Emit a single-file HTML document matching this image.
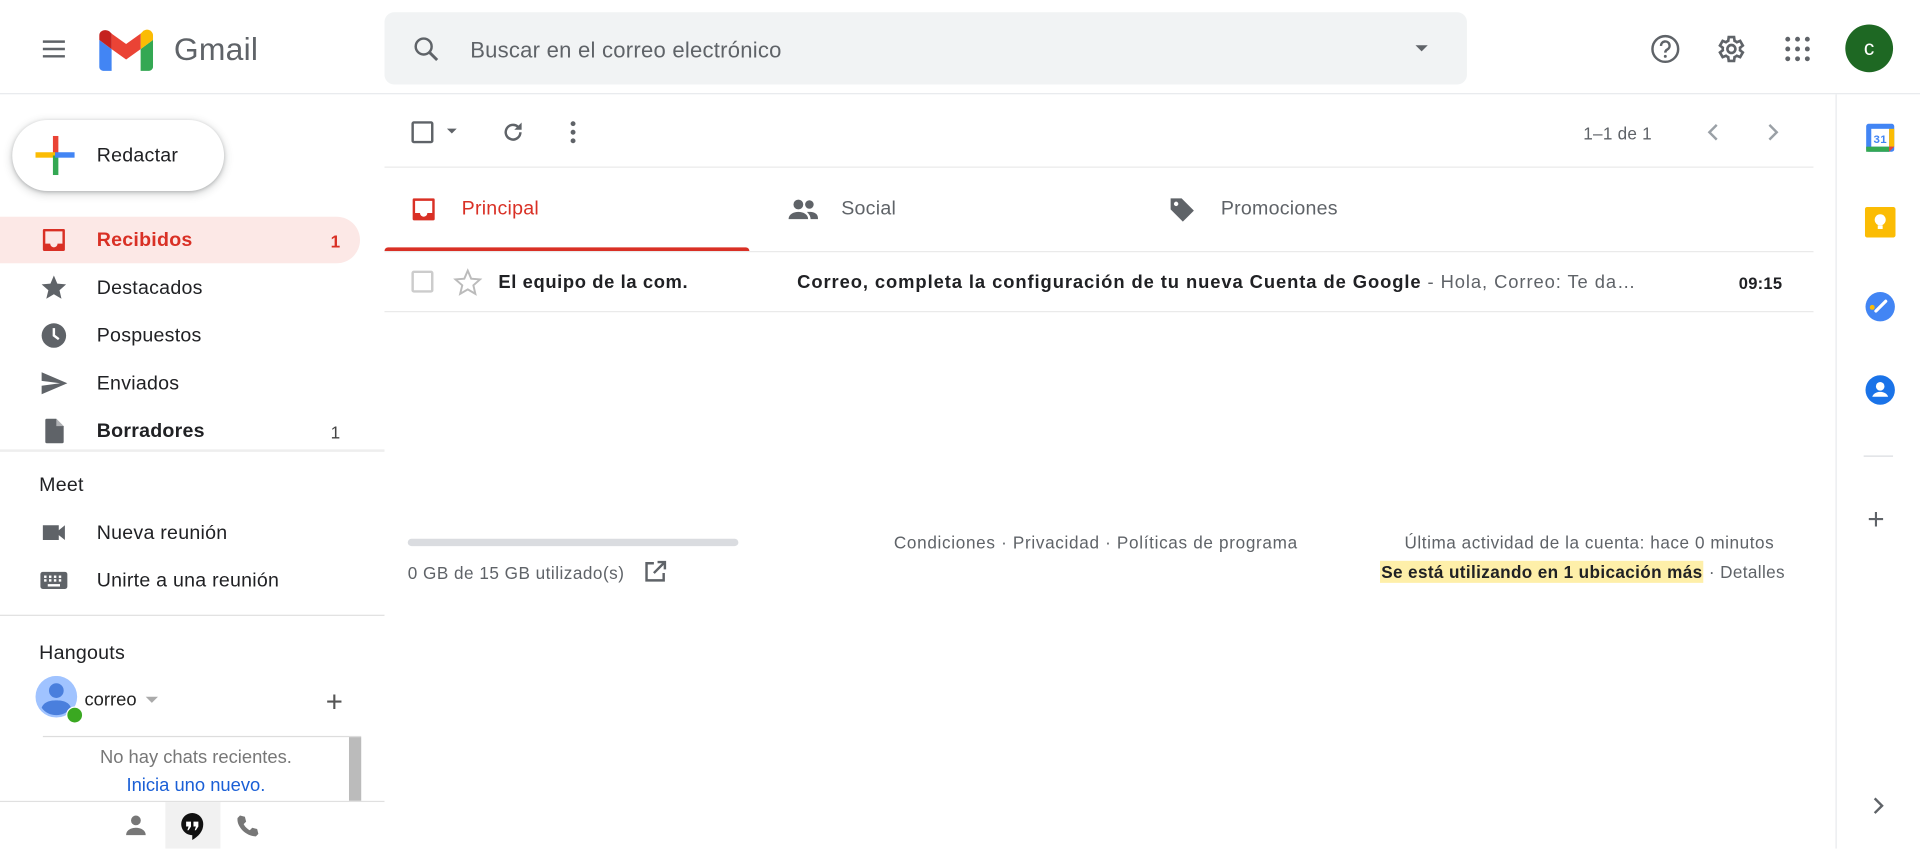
<!DOCTYPE html>
<html><head><meta charset="utf-8"><style>
*{box-sizing:border-box;margin:0;padding:0}
html,body{width:1920px;height:849px;overflow:hidden;background:#fff}
#w{position:absolute;left:0;top:0;width:1568px;height:693px;transform:scale(1.22449);transform-origin:0 0;font-family:"Liberation Sans",Arial,sans-serif;color:#202124;letter-spacing:.2px}
.a{position:absolute}
.t{font-size:16px;color:#202124}
svg{display:block}
</style></head><body><div id="w">
<div class="a" style="left:0;top:76px;width:1568px;height:1px;background:#e8eaed"></div>
<svg class="a" style="left:32px;top:28px" width="24" height="24"><path d="M3 6h18M3 12h18M3 18h18" stroke="#5f6368" stroke-width="2"/></svg>
<svg class="a" style="left:81px;top:24px" width="44" height="34" viewBox="0 0 52 40">
<path d="M4 40h8V19L0 10v26c0 2 2 4 4 4z" fill="#4285f4"/><path d="M40 40h8c2 0 4-2 4-4V10l-12 9z" fill="#34a853"/>
<path d="M40 4v15l12-9V6c0-5-6-8-10-4z" fill="#fbbc04"/><path d="M12 19V4l14 10 14-10v15L26 29z" fill="#ea4335"/>
<path d="M0 6v4l12 9V4L10 2C6-1 0 1 0 6z" fill="#c5221f"/></svg>
<div class="a" style="left:142px;top:25px;font-size:26px;color:#5f6368">Gmail</div>
<div class="a" style="left:314px;top:10px;width:884px;height:59px;background:#f1f3f4;border-radius:8px"></div>
<svg class="a" style="left:336px;top:28px" width="24" height="24"><circle cx="10" cy="10" r="6.5" fill="none" stroke="#5f6368" stroke-width="2"/><path d="M15 15l6 6" stroke="#5f6368" stroke-width="2.4"/></svg>
<div class="a" style="left:384px;top:31px;font-size:18px;color:#5f6368">Buscar en el correo electrónico</div>
<div class="a" style="left:1156px;top:37px;border:5px solid transparent;border-top-color:#5f6368"></div>
<svg class="a" style="left:1347px;top:27px" width="26" height="26"><circle cx="13" cy="13" r="10.5" fill="none" stroke="#5f6368" stroke-width="2"/><path d="M9.5 10.5a3.5 3.5 0 1 1 5 3c-1.2.7-1.5 1.3-1.5 2.5" fill="none" stroke="#5f6368" stroke-width="2"/><circle cx="13" cy="19" r="1.2" fill="#5f6368"/></svg>
<svg class="a" style="left:1400px;top:27px" width="26" height="26" viewBox="0 0 24 24"><path d="M19.4 13a7.5 7.5 0 0 0 0-2l2.1-1.6-2-3.5-2.5 1a7 7 0 0 0-1.7-1L14.9 3h-4l-.4 2.9a7 7 0 0 0-1.7 1l-2.5-1-2 3.5L6.4 11a7.5 7.5 0 0 0 0 2l-2.1 1.6 2 3.5 2.5-1a7 7 0 0 0 1.7 1l.4 2.9h4l.4-2.9a7 7 0 0 0 1.7-1l2.5 1 2-3.5z" fill="none" stroke="#5f6368" stroke-width="2"/><circle cx="12.9" cy="12" r="3" fill="none" stroke="#5f6368" stroke-width="2"/></svg>
<svg class="a" style="left:1456px;top:28px" width="24" height="24"><g fill="#5f6368"><circle cx="4" cy="4" r="2"/><circle cx="12" cy="4" r="2"/><circle cx="20" cy="4" r="2"/><circle cx="4" cy="12" r="2"/><circle cx="12" cy="12" r="2"/><circle cx="20" cy="12" r="2"/><circle cx="4" cy="20" r="2"/><circle cx="12" cy="20" r="2"/><circle cx="20" cy="20" r="2"/></g></svg>
<div class="a" style="left:1507px;top:20px;width:39px;height:39px;border-radius:50%;background:#1e6823;color:#fff;font-size:17px;text-align:center;line-height:39px">c</div>
<div class="a" style="left:10px;top:98px;width:173px;height:58px;border-radius:29px;background:#fff;box-shadow:0 1px 3px rgba(60,64,67,.3),0 2px 6px 2px rgba(60,64,67,.15)"></div>
<svg class="a" style="left:29px;top:111px" width="32" height="32" viewBox="0 0 36 36"><rect x="16" y="0" width="5" height="18" fill="#ea4335"/><rect x="0" y="15" width="18" height="5" fill="#fbbc04"/><rect x="16" y="18" width="5" height="18" fill="#34a853"/><rect x="18" y="15" width="18" height="5" fill="#4285f4"/></svg>
<div class="a t" style="left:79px;top:119px">Redactar</div>
<div class="a" style="left:0;top:177px;width:294px;height:38px;background:#fce8e6;border-radius:0 19px 19px 0"></div>
<svg class="a" style="left:32px;top:184px" width="24" height="24"><path d="M4 3h16a1 1 0 0 1 1 1v16a1 1 0 0 1-1 1H4a1 1 0 0 1-1-1V4a1 1 0 0 1 1-1zm1 2v10h4a3 3 0 0 0 6 0h4V5z" fill="#d93025"/></svg>
<div class="a" style="left:79px;top:188px;font-size:16px;font-weight:bold;color:#d93025">Recibidos</div>
<div class="a" style="left:270px;top:189px;font-size:14px;font-weight:bold;color:#d93025">1</div>
<svg class="a" style="left:32px;top:223px" width="24" height="24"><path d="M12 17.3l6.2 3.7-1.6-7L22 9.2l-7.2-.6L12 2 9.2 8.6 2 9.2 7.5 14l-1.7 7z" fill="#5f6368"/></svg>
<div class="a t" style="left:79px;top:227px">Destacados</div>
<svg class="a" style="left:32px;top:262px" width="24" height="24"><circle cx="12" cy="12" r="10" fill="#5f6368"/><path d="M12 6v6l4 3" stroke="#fff" stroke-width="2" fill="none"/></svg>
<div class="a t" style="left:79px;top:266px">Pospuestos</div>
<svg class="a" style="left:32px;top:301px" width="24" height="24"><path d="M2 21l21-9L2 3v7l15 2-15 2z" fill="#5f6368"/></svg>
<div class="a t" style="left:79px;top:305px">Enviados</div>
<svg class="a" style="left:32px;top:340px" width="24" height="24"><path d="M6 2h8l6 6v13a1 1 0 0 1-1 1H6a1 1 0 0 1-1-1V3a1 1 0 0 1 1-1z" fill="#5f6368"/><path d="M14 2v6h6" fill="#fff" opacity=".5"/></svg>
<div class="a" style="left:79px;top:344px;font-size:16px;font-weight:bold">Borradores</div>
<div class="a" style="left:270px;top:345px;font-size:14px;color:#444">1</div>
<div class="a" style="left:0;top:367px;width:314px;height:2px;background:#eee"></div>
<div class="a t" style="left:32px;top:388px">Meet</div>
<svg class="a" style="left:32px;top:423px" width="24" height="24"><path d="M3 6h13v12H3zM16 10l5-4v12l-5-4z" fill="#5f6368"/></svg>
<div class="a t" style="left:79px;top:427px">Nueva reunión</div>
<svg class="a" style="left:32px;top:462px" width="24" height="24"><rect x="1" y="5" width="22" height="14" rx="2" fill="#5f6368"/><g fill="#fff"><rect x="4" y="8" width="2" height="2"/><rect x="8" y="8" width="2" height="2"/><rect x="12" y="8" width="2" height="2"/><rect x="16" y="8" width="2" height="2"/><rect x="4" y="11" width="2" height="2"/><rect x="8" y="11" width="2" height="2"/><rect x="12" y="11" width="2" height="2"/><rect x="16" y="11" width="2" height="2"/><rect x="7" y="15" width="10" height="2"/></g></svg>
<div class="a t" style="left:79px;top:466px">Unirte a una reunión</div>
<div class="a" style="left:0;top:502px;width:314px;height:1px;background:#e0e0e0"></div>
<div class="a t" style="left:32px;top:525px">Hangouts</div>
<svg class="a" style="left:29px;top:552px" width="40" height="40"><circle cx="17" cy="17" r="17" fill="#a0c3ff"/><circle cx="17" cy="12" r="6" fill="#4a7fdd"/><path d="M5 26c2-5 7-6 12-6s10 1 12 6c-3 4-7 6-12 6s-9-2-12-6z" fill="#4a7fdd"/><circle cx="32" cy="32" r="7" fill="#fff"/><circle cx="32" cy="32" r="6" fill="#3aa821"/></svg>
<div class="a" style="left:69px;top:563px;font-size:15px;color:#222;letter-spacing:0">correo</div>
<div class="a" style="left:119px;top:569px;border:5px solid transparent;border-top-color:#aaa"></div>
<div class="a" style="left:266px;top:560px;font-size:24px;color:#555;font-weight:300">+</div>
<div class="a" style="left:35px;top:601px;width:260px;height:1px;background:#ddd"></div>
<div class="a" style="left:285px;top:602px;width:10px;height:52px;background:#bbb"></div>
<div class="a" style="left:35px;top:610px;width:250px;text-align:center;font-size:15px;color:#777;letter-spacing:0">No hay chats recientes.</div>
<div class="a" style="left:35px;top:633px;width:250px;text-align:center;font-size:15px;color:#1a5fd6;letter-spacing:0">Inicia uno nuevo.</div>
<div class="a" style="left:0;top:654px;width:314px;height:1px;background:#e0e0e0"></div>
<div class="a" style="left:135px;top:655px;width:45px;height:38px;background:#f1f1f1"></div>
<svg class="a" style="left:101px;top:664px" width="20" height="20"><circle cx="10" cy="6" r="4" fill="#777"/><path d="M2 18c0-4 4-6 8-6s8 2 8 6z" fill="#777"/></svg>
<svg class="a" style="left:146px;top:663px" width="22" height="24"><path d="M11 1a9 9 0 0 0-9 9c0 5 4 9 9 9v4c5-3 9-7 9-13a9 9 0 0 0-9-9z" fill="#111"/><path d="M6 8h4v4l-2 3H7l1-3H6zM12 8h4v4l-2 3h-1l1-3h-2z" fill="#fff"/></svg>
<svg class="a" style="left:192px;top:664px" width="20" height="20"><path d="M4 2l4 1 1 4-2 2c1 2 3 4 5 5l2-2 4 1 1 4-2 2C9 19 1 11 2 4z" fill="#777"/></svg>
<div class="a" style="left:336px;top:99px;width:18px;height:18px;border:2px solid #5f6368;border-radius:2px"></div>
<div class="a" style="left:365px;top:105px;border:4px solid transparent;border-top-color:#5f6368"></div>
<svg class="a" style="left:407px;top:96px" width="24" height="24"><path d="M18 12a6 6 0 1 1-2-4.5" fill="none" stroke="#5f6368" stroke-width="2"/><path d="M19 4v6h-6z" fill="#5f6368"/></svg>
<svg class="a" style="left:456px;top:96px" width="24" height="24"><g fill="#5f6368"><circle cx="12" cy="5" r="2"/><circle cx="12" cy="12" r="2"/><circle cx="12" cy="19" r="2"/></g></svg>
<div class="a" style="left:1293px;top:101px;font-size:14px;color:#5f6368">1–1 de 1</div>
<svg class="a" style="left:1387px;top:96px" width="24" height="24"><path d="M15 6l-6 6 6 6" fill="none" stroke="#9aa0a6" stroke-width="2"/></svg>
<svg class="a" style="left:1436px;top:96px" width="24" height="24"><path d="M9 6l6 6-6 6" fill="none" stroke="#9aa0a6" stroke-width="2"/></svg>
<div class="a" style="left:314px;top:136px;width:1167px;height:1px;background:#eaeaea"></div>
<svg class="a" style="left:334px;top:159px" width="24" height="24"><path d="M4 3h16a1 1 0 0 1 1 1v16a1 1 0 0 1-1 1H4a1 1 0 0 1-1-1V4a1 1 0 0 1 1-1zm1 2v10h4a3 3 0 0 0 6 0h4V5z" fill="#d93025"/></svg>
<div class="a" style="left:377px;top:162px;font-size:16px;color:#d93025">Principal</div>
<div class="a" style="left:314px;top:202px;width:298px;height:3px;background:#d93025;border-radius:3px 3px 0 0"></div>
<svg class="a" style="left:643px;top:159px" width="26" height="24"><circle cx="9" cy="8" r="4" fill="#5f6368"/><circle cx="18" cy="8" r="3.5" fill="#5f6368"/><path d="M1 20c0-4 4-6 8-6s8 2 8 6z M18 14c3 0 7 1 7 5v1h-6c0-2-1-4-3-6z" fill="#5f6368"/></svg>
<div class="a" style="left:687px;top:162px;font-size:16px;color:#5f6368">Social</div>
<svg class="a" style="left:953px;top:159px" width="24" height="24"><path d="M3 3h9l10 10-9 9L3 12z" fill="#5f6368"/><circle cx="7.5" cy="7.5" r="1.8" fill="#fff"/></svg>
<div class="a" style="left:997px;top:162px;font-size:16px;color:#5f6368">Promociones</div>
<div class="a" style="left:314px;top:205px;width:1167px;height:1px;background:#eaeaea"></div>
<div class="a" style="left:336px;top:221px;width:18px;height:18px;border:2px solid #ccc;border-radius:2px"></div>
<svg class="a" style="left:370px;top:219px" width="24" height="24"><path d="M12 17.3l6.2 3.7-1.6-7L22 9.2l-7.2-.6L12 2 9.2 8.6 2 9.2 7.5 14l-1.7 7z" fill="none" stroke="#bbb" stroke-width="1.6"/></svg>
<div class="a" style="left:407px;top:222px;font-size:15px;font-weight:bold;letter-spacing:.5px">El equipo de la com.</div>
<div class="a" style="left:651px;top:222px;font-size:15px;white-space:nowrap;letter-spacing:.75px"><b>Correo, completa la configuración de tu nueva Cuenta de Google</b><span style="color:#5f6368"> - Hola, Correo: Te da…</span></div>
<div class="a" style="left:1420px;top:224px;font-size:13.5px;font-weight:bold">09:15</div>
<div class="a" style="left:314px;top:254px;width:1167px;height:1px;background:#eaeaea"></div>
<div class="a" style="left:333px;top:440px;width:270px;height:6px;background:#dadce0;border-radius:3px"></div>
<div class="a" style="left:333px;top:460px;font-size:14px;color:#5f6368;letter-spacing:.4px">0 GB de 15 GB utilizado(s)</div>
<svg class="a" style="left:524px;top:456px" width="22" height="22"><path d="M10 4H4v14h14v-6M13 3h6v6M19 3l-9 9" fill="none" stroke="#5f6368" stroke-width="2"/></svg>
<div class="a" style="left:730px;top:435px;font-size:14px;color:#5f6368;letter-spacing:.55px">Condiciones · Privacidad · Políticas de programa</div>
<div class="a" style="left:1147px;top:435px;font-size:14px;color:#5f6368;letter-spacing:.45px">Última actividad de la cuenta: hace 0 minutos</div>
<div class="a" style="left:1127px;top:459px;font-size:14px;color:#5f6368;white-space:nowrap;letter-spacing:.3px"><b style="background:#feefa9;color:#202124;padding:1px 1px">Se está utilizando en 1 ubicación más</b> · Detalles</div>
<div class="a" style="left:1499px;top:77px;width:1px;height:616px;background:#e8eaed"></div>
<svg class="a" style="left:1523px;top:100px" width="25" height="25" viewBox="0 0 24 24"><rect x="1" y="1" width="22" height="22" rx="2" fill="#4285f4"/><rect x="5" y="5" width="14" height="14" fill="#fff"/><rect x="1" y="19" width="18" height="4" fill="#34a853"/><rect x="19" y="5" width="4" height="14" fill="#fbbc04"/><path d="M19 19h4l-4 4z" fill="#ea4335"/><text x="12" y="16" font-size="9" text-anchor="middle" fill="#4285f4" font-family="Liberation Sans" font-weight="bold">31</text></svg>
<svg class="a" style="left:1523px;top:169px" width="25" height="25"><rect x="0" y="0" width="25" height="25" rx="2" fill="#fbbc04"/><circle cx="12.5" cy="10.5" r="4.5" fill="#fff"/><rect x="10.5" y="15" width="4" height="3" fill="#fff"/></svg>
<svg class="a" style="left:1523px;top:238px" width="25" height="25"><circle cx="12.5" cy="12.5" r="12" fill="#4285f4"/><circle cx="6" cy="13" r="2" fill="#fbbc04"/><path d="M9 16l8-8" stroke="#fff" stroke-width="2.6" stroke-linecap="round"/></svg>
<svg class="a" style="left:1523px;top:306px" width="25" height="25"><circle cx="12.5" cy="12.5" r="12" fill="#1a73e8"/><circle cx="12.5" cy="9.5" r="3.5" fill="#fff"/><path d="M6 18c1-3 4-4 6.5-4s5.5 1 6.5 4z" fill="#fff"/></svg>
<div class="a" style="left:1522px;top:372px;width:24px;height:1px;background:#dadce0"></div>
<div class="a" style="left:1525px;top:411px;font-size:24px;color:#5f6368;font-weight:300">+</div>
<svg class="a" style="left:1524px;top:648px" width="20" height="20"><path d="M7 4l6 6-6 6" fill="none" stroke="#5f6368" stroke-width="2"/></svg>
</div></body></html>
